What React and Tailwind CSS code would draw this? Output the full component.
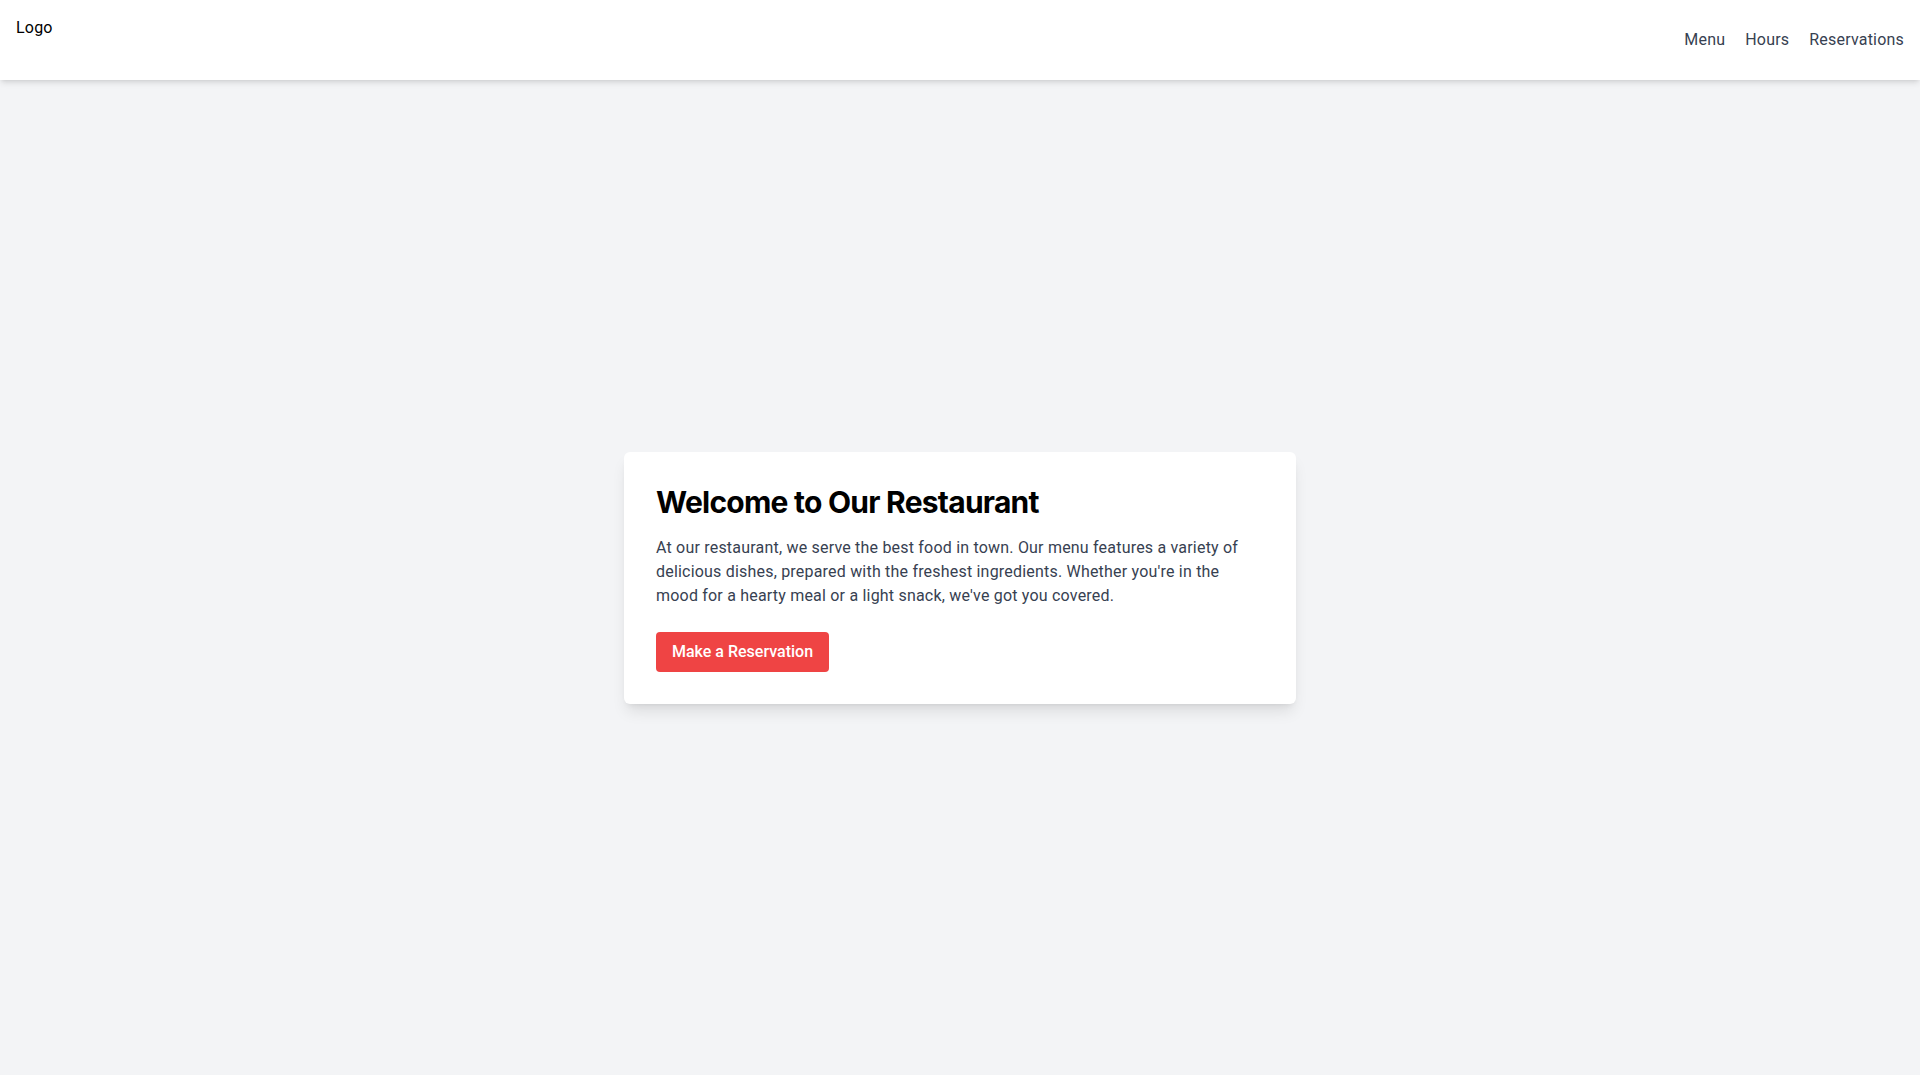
export default function App() {
  return (
    <div className="min-h-screen flex flex-col bg-[#f3f4f6] tracking-[0.2px]" style={{ fontFamily: 'Roboto, "Noto Sans", sans-serif' }}>
      <header className="bg-white shadow-md p-4 flex justify-between items-center">
        <div className="h-12 text-base leading-6 text-black">Logo</div>
        <nav className="flex gap-5 text-base text-[#374151]">
          <a href="#">Menu</a>
          <a href="#">Hours</a>
          <a href="#">Reservations</a>
        </nav>
      </header>
      <main className="flex-1 flex items-center justify-center">
        <div className="w-full max-w-2xl bg-white rounded-md shadow-lg p-8">
          <h1 className="text-3xl font-bold text-black mb-4 tracking-tight" style={{ fontFamily: 'Inter, sans-serif' }}>Welcome to Our Restaurant</h1>
          <p className="text-base leading-6 text-[#374151] mb-6">
            At our restaurant, we serve the best food in town. Our menu features a variety of delicious dishes, prepared with the freshest ingredients. Whether you're in the mood for a hearty meal or a light snack, we've got you covered.
          </p>
          <button className="bg-[#ef4444] text-white font-medium tracking-normal px-4 py-2 rounded">Make a Reservation</button>
        </div>
      </main>
    </div>
  );
}
